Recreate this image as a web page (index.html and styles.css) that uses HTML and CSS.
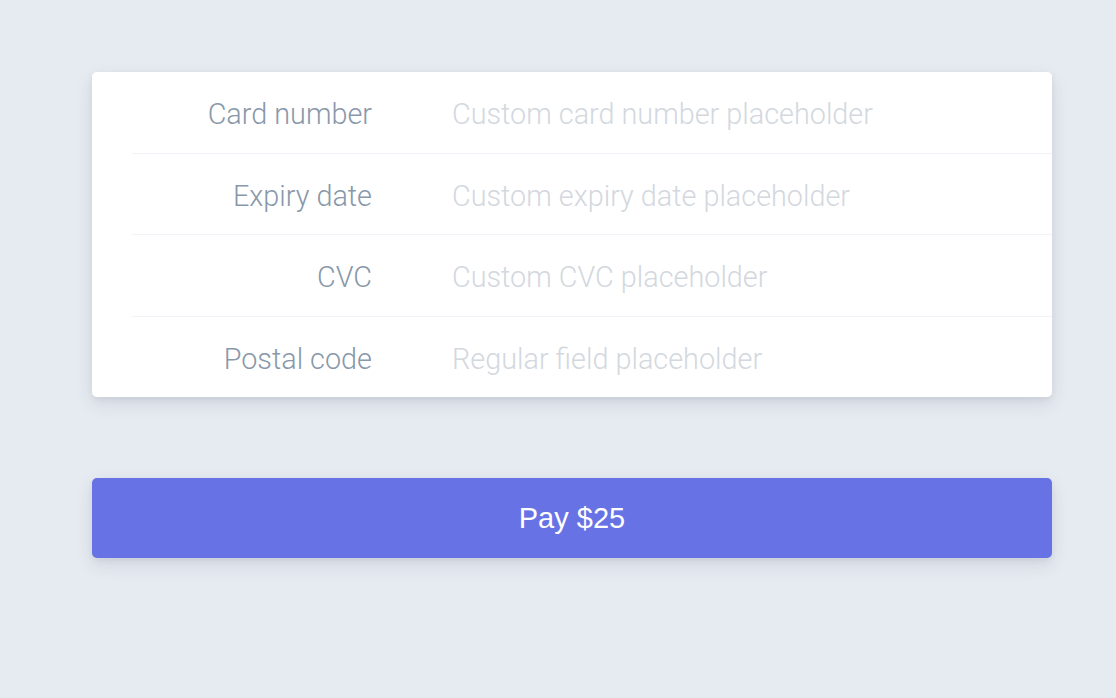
FILE: index.html
```html
<!DOCTYPE html>
<html lang="en">
<head>
<meta charset="utf-8">
<title>Payment</title>
<link rel="stylesheet" href="styles.css">
</head>
<body>
<main class="page">
  <form class="payment">
    <fieldset class="card">
      <div class="row">
        <label class="label" for="card-number">Card number</label>
        <input class="field" id="card-number" type="text" placeholder="Custom card number placeholder">
      </div>
      <div class="row">
        <label class="label" for="expiry">Expiry date</label>
        <input class="field" id="expiry" type="text" placeholder="Custom expiry date placeholder">
      </div>
      <div class="row">
        <label class="label" for="cvc">CVC</label>
        <input class="field" id="cvc" type="text" placeholder="Custom CVC placeholder">
      </div>
      <div class="row">
        <label class="label" for="postal">Postal code</label>
        <input class="field" id="postal" type="text" placeholder="Regular field placeholder">
      </div>
    </fieldset>
    <button class="pay" type="button">Pay $25</button>
  </form>
</main>
</body>
</html>
```

FILE: styles.css
```css
html, body {
  margin: 0;
  padding: 0;
  height: 100%;
  background: #e6ebf1;
}

body {
  font-family: "Roboto", "Liberation Sans", sans-serif;
}

.page {
  padding: 72px 0 0 92px;
}

.payment {
  width: 960px;
  display: flex;
  flex-direction: column;
  gap: 81px;
}

.card {
  margin: 0;
  padding: 0 0 0 40px;
  border: 0;
  background: #fff;
  border-radius: 5px;
  box-shadow: 0 7px 18px rgba(50, 50, 93, 0.10), 0 3px 6px rgba(0, 0, 0, 0.06);
  display: flex;
  flex-direction: column;
}

.row {
  box-sizing: border-box;
  height: 81.5px;
  padding-top: 4px;
  display: flex;
  align-items: center;
  border-bottom: 1px solid #f0f3f7;
}

.row:last-child {
  height: 80.5px;
  border-bottom: 0;
}

.label {
  width: 240px;
  flex: none;
  text-align: right;
  font-family: "Roboto", sans-serif;
  font-weight: 300;
  font-size: 28.8px;
  color: #8898aa;
}

.field {
  flex: 1;
  margin-left: 80px;
  border: 0;
  outline: none;
  padding: 0;
  background: transparent;
  font-family: "Roboto", sans-serif;
  font-weight: 300;
  font-size: 28.8px;
  color: #32325d;
}

.field::placeholder {
  color: #d3d8de;
  opacity: 1;
}

.pay {
  height: 80px;
  border: 0;
  border-radius: 5px;
  background: #6772e5;
  color: #fff;
  font-family: "Liberation Sans", Arial, sans-serif;
  font-size: 29px;
  font-weight: 400;
  box-shadow: 0 7px 18px rgba(50, 50, 93, 0.10), 0 3px 6px rgba(0, 0, 0, 0.06);
  cursor: pointer;
}
```
